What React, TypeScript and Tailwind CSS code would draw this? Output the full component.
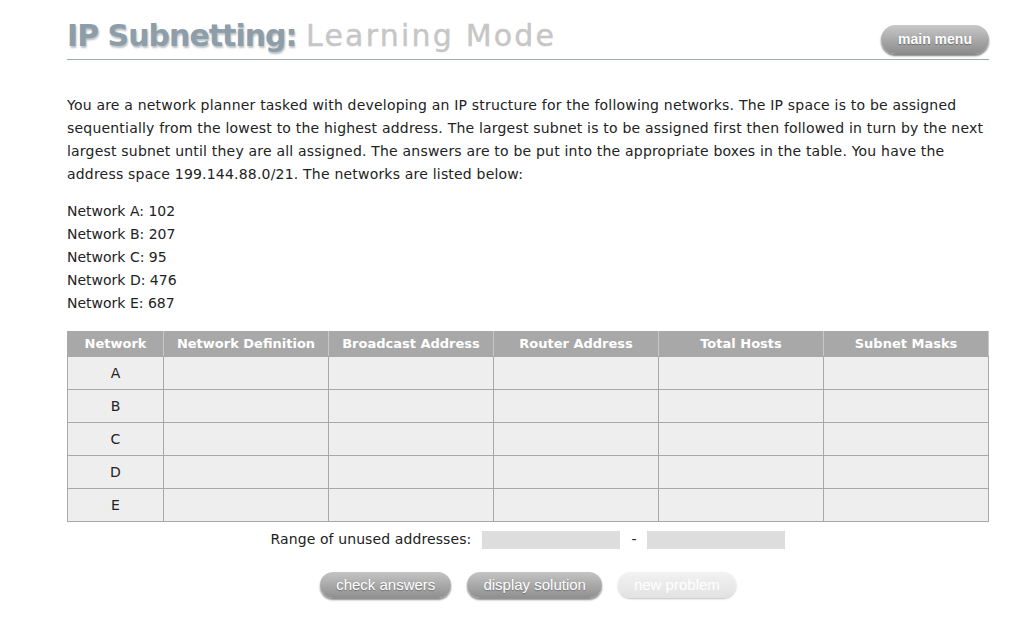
const rows = ["A", "B", "C", "D", "E"];
const headers = [
  "Network",
  "Network Definition",
  "Broadcast Address",
  "Router Address",
  "Total Hosts",
  "Subnet Masks",
];

const gothic = { fontFamily: '"DejaVu Sans", Lato, sans-serif' };

const PillButton = ({ label, disabled }: { label: string; disabled?: boolean }) => (
  <button
    className={
      disabled
        ? "h-[26px] rounded-full bg-gradient-to-b from-[#f2f2f2] to-[#e2e2e2] px-4 text-[15px] text-white shadow-[0_1px_2px_rgba(0,0,0,0.25)] font-['Liberation_Sans',sans-serif]"
        : "h-[26px] rounded-full bg-gradient-to-b from-[#c4c4c4] to-[#8f8f8f] px-4 text-[15px] text-white shadow-[0_2px_2px_rgba(0,0,0,0.45)] [text-shadow:0_1px_1px_rgba(0,0,0,0.3)] font-['Liberation_Sans',sans-serif]"
    }
  >
    {label}
  </button>
);

export default function App() {
  return (
    <div className="min-h-screen bg-white text-[#222]" style={gothic}>
      <div className="w-[922px] ml-[67px] pt-[16px]">
        <div className="flex items-end justify-between border-b border-[#9aabb9]">
          <h1 className="mb-[3px] text-[30px] leading-[40px]">
            <span className="font-bold tracking-[-1px] text-[#8d9eab] [text-shadow:1px_2px_2px_rgba(0,0,0,0.25)]">
              IP Subnetting:
            </span>{" "}
            <span className="tracking-[2.2px] text-[#c6c6c6] [-webkit-text-stroke:0.4px_#c6c6c6]">
              Learning Mode
            </span>
          </h1>
          <button className="mb-[5px] h-[29px] w-[108px] rounded-full bg-gradient-to-b from-[#c8c8c8] to-[#8c8c8c] text-[14px] font-bold text-white shadow-[0_2px_2px_rgba(0,0,0,0.5)] [text-shadow:0_1px_1px_rgba(0,0,0,0.35)] font-['Liberation_Sans',sans-serif]">
            main menu
          </button>
        </div>

        <p className="mt-[34px] text-[14px] leading-[23px] tracking-[0.2px]">
          You are a network planner tasked with developing an IP structure for the following
          networks. The IP space is to be assigned sequentially from the lowest to the highest
          address. The largest subnet is to be assigned first then followed in turn by the next
          largest subnet until they are all assigned. The answers are to be put into the
          appropriate boxes in the table. You have the address space 199.144.88.0/21. The
          networks are listed below:
        </p>

        <div className="mt-[14px] text-[14px] leading-[23px]">
          <div>Network A: 102</div>
          <div>Network B: 207</div>
          <div>Network C: 95</div>
          <div>Network D: 476</div>
          <div>Network E: 687</div>
        </div>

        <table className="mt-[16px] w-full border-collapse text-[14px]">
          <thead>
            <tr className="bg-[#a8a8a8] text-white">
              {headers.map((h, i) => (
                <th
                  key={h}
                  className={`h-[25px] border border-[#a8a8a8] border-r-[#c8c8c8] text-[13px] font-bold ${
                    i === 0 ? "w-[96px]" : "w-[165px]"
                  }`}
                >
                  {h}
                </th>
              ))}
            </tr>
          </thead>
          <tbody>
            {rows.map((r) => (
              <tr key={r} className="h-[33px] bg-[#eeeeee]">
                <td className="border border-[#a8a8a8] text-center">{r}</td>
                {headers.slice(1).map((h) => (
                  <td key={h} className="border border-[#a8a8a8]" />
                ))}
              </tr>
            ))}
          </tbody>
        </table>

        <div className="mt-[7px] flex items-center justify-center text-[14px]">
          <span className="mr-[11px] tracking-[0.1px]">Range of unused addresses:</span>
          <div className="h-[18px] w-[138px] bg-[#dddddd]" />
          <span className="mx-[11px]">-</span>
          <div className="h-[18px] w-[138px] bg-[#dddddd]" />
        </div>

        <div className="mt-[22px] flex justify-center gap-[16px]">
          <PillButton label="check answers" />
          <PillButton label="display solution" />
          <PillButton label="new problem" disabled />
        </div>
      </div>
    </div>
  );
}
